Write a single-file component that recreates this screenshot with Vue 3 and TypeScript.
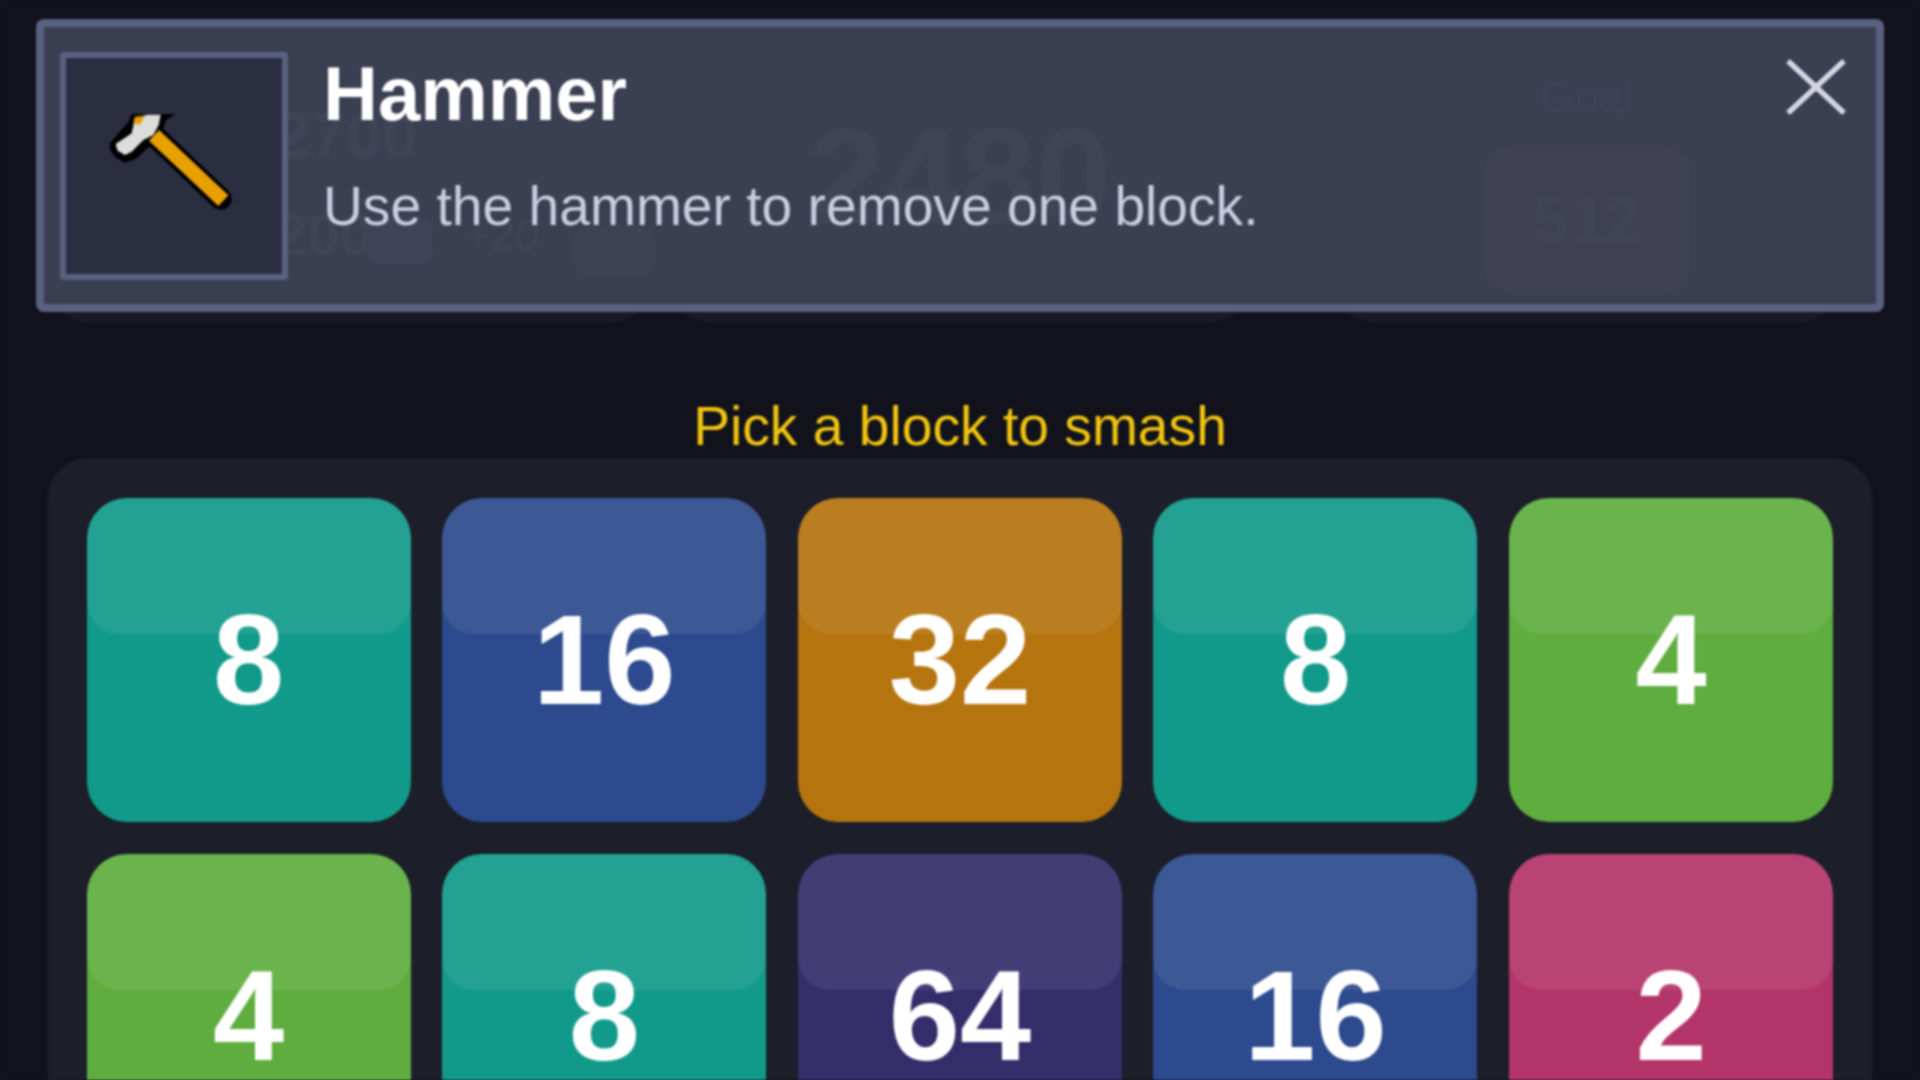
<script setup lang="ts">
interface Tile {
  value: number
  tone: string
}

const tiles: Tile[] = [
  { value: 8, tone: 'teal' },
  { value: 16, tone: 'blue' },
  { value: 32, tone: 'orange' },
  { value: 8, tone: 'teal' },
  { value: 4, tone: 'green' },
  { value: 4, tone: 'green' },
  { value: 8, tone: 'teal' },
  { value: 64, tone: 'purple' },
  { value: 16, tone: 'blue' },
  { value: 2, tone: 'pink' },
]
</script>

<template>
  <div class="stage">
    <header class="hud">
      <section class="card card-left">
        <div class="best">2700</div>
        <div class="coins">
          <span class="coin-count">200</span>
          <span class="coin-icon"></span>
          <span class="coin-plus">+20</span>
          <span class="coin-gift"></span>
        </div>
      </section>
      <section class="card card-mid">
        <div class="score">2480</div>
      </section>
      <section class="card card-right">
        <div class="goal-label">Goal</div>
        <div class="goal-tile">512</div>
      </section>
    </header>

    <p class="hint">Pick a block to smash</p>

    <main class="board">
      <div v-for="(tile, i) in tiles" :key="i" class="tile" :class="tile.tone">
        <span class="num">{{ tile.value }}</span>
      </div>
    </main>

    <aside class="modal">
      <div class="icon-box">
        <svg class="hammer" viewBox="48 24 648 648" width="216" height="216" aria-hidden="true">
          <path d="M180 280 L235 215 L245 193 L378 193 L348 210 L332 260 L300 288 L255 328 L225 338 L195 322 L180 298 Z" fill="#000" />
          <path d="M318 262 L512 446" fill="none" stroke="#000" stroke-width="66" stroke-linecap="round" />
          <path d="M312 256 L520 452" fill="none" stroke="#e8a000" stroke-width="44" stroke-linecap="butt" />
          <path d="M197 282 L245 250 L255 205 L290 194 L332 194 L326 225 L310 255 L280 270 L245 305 L225 315 L203 302 Z" fill="#dcdcdc" />
          <path d="M255 200 L285 198 L268 225 L250 218 Z" fill="#e8a000" />
        </svg>
      </div>
      <div class="copy">
        <h2 class="title">Hammer</h2>
        <p class="desc">Use the hammer to remove one block.</p>
      </div>
      <svg class="close" viewBox="0 0 62 56" width="62" height="56" aria-label="Close">
        <path d="M3 2 L59 54 M59 2 L3 54" stroke="#d4d7e2" stroke-width="5.5" fill="none" />
      </svg>
    </aside>
  </div>
</template>

<style scoped>
.stage {
  position: relative;
  width: 1920px;
  height: 1080px;
  overflow: hidden;
  background: #11121b;
  font-family: "Liberation Sans", Arial, sans-serif;
  color: #fff;
  filter: blur(0.9px);
}

.hud {
  display: flex;
  padding: 50px 0 0 44px;
  height: 273px;
}

.card {
  background: #181b26;
  border-radius: 48px;
  box-sizing: border-box;
}

.card-left {
  width: 611px;
  padding: 54px 0 0 231px;
}

.best {
  font-size: 64px;
  line-height: 64px;
  font-weight: 700;
  color: #d8dbe6;
}

.coins {
  display: flex;
  align-items: flex-start;
  margin-top: 42px;
}

.coin-count {
  font-size: 58px;
  font-weight: 700;
  line-height: 50px;
  width: 92px;
}

.coin-icon {
  width: 66px;
  height: 46px;
  margin-top: 8px;
  border-radius: 14px;
  background: #c4d2ff;
}

.coin-plus {
  margin-left: 32px;
  font-size: 44px;
  line-height: 50px;
  width: 110px;
}

.coin-gift {
  width: 81px;
  height: 50px;
  border-radius: 16px;
  background: #a9803f;
  margin-top: 16px;
}

.card-mid {
  width: 588px;
  margin-left: 11px;
  padding-top: 58px;
  text-align: center;
}

.score {
  font-size: 136px;
  line-height: 136px;
  font-weight: 700;
}

.card-right {
  width: 514px;
  margin-left: 76px;
  padding-top: 26px;
  display: flex;
  flex-direction: column;
  align-items: center;
}

.goal-label {
  font-size: 44px;
  line-height: 44px;
  color: #aab;
}

.goal-tile {
  margin-top: 27px;
  width: 205px;
  height: 145px;
  border-radius: 24px;
  background: #d0433c;
  display: flex;
  align-items: center;
  justify-content: center;
  font-size: 65px;
  font-weight: 700;
}

.hint {
  margin: 0;
  margin-top: 72px;
  height: 63px;
  font-size: 55.2px;
  line-height: 63px;
  text-align: center;
  color: #f1c40f;
}

.board {
  display: grid;
  grid-template-columns: repeat(5, 324px);
  gap: 32px 31.6px;
  width: 1824px;
  margin-left: 48px;
  padding: 39.5px 38.7px;
  box-sizing: border-box;
  background: #1c1e29;
  border-radius: 40px;
}

.tile {
  position: relative;
  height: 324px;
  border-radius: 40px;
  display: flex;
  align-items: center;
  justify-content: center;
  overflow: hidden;
}

.tile::before {
  content: "";
  position: absolute;
  top: 0;
  left: 0;
  right: 0;
  height: 136px;
  border-radius: 40px 40px 32px 32px;
  background: rgba(255, 255, 255, 0.08);
}

.num {
  position: relative;
  font-size: 128px;
  line-height: 1;
  font-weight: 700;
  color: #fff;
}

.teal { background: #119a8a; }
.blue { background: #2c4a8d; }
.orange { background: #b5740e; }
.green { background: #5fad3e; }
.purple { background: #332d6a; }
.pink { background: #b33468; }

.modal {
  position: absolute;
  top: 19px;
  left: 36px;
  width: 1848px;
  height: 293px;
  box-sizing: border-box;
  display: flex;
  align-items: center;
  padding: 0 16px;
  background: rgba(60, 64, 84, 0.98);
  border: 8px solid #596180;
  border-radius: 8px;
}

.icon-box {
  flex: none;
  width: 228px;
  height: 228px;
  box-sizing: border-box;
  border: 6px solid #596180;
  border-radius: 4px;
  background: #2a2e40;
}

.hammer {
  display: block;
}

.copy {
  margin-left: 35px;
  align-self: flex-start;
}

.title {
  margin: 25px 0 0;
  font-size: 76px;
  line-height: 84px;
  font-weight: 700;
  color: #fff;
}

.desc {
  margin: 39px 0 0;
  font-size: 55.2px;
  line-height: 62px;
  color: #c8cde0;
}

.close {
  position: absolute;
  top: 32px;
  right: 29px;
}
</style>

<style>
html, body {
  margin: 0;
  background: #11121b;
  overflow: hidden;
}
</style>
